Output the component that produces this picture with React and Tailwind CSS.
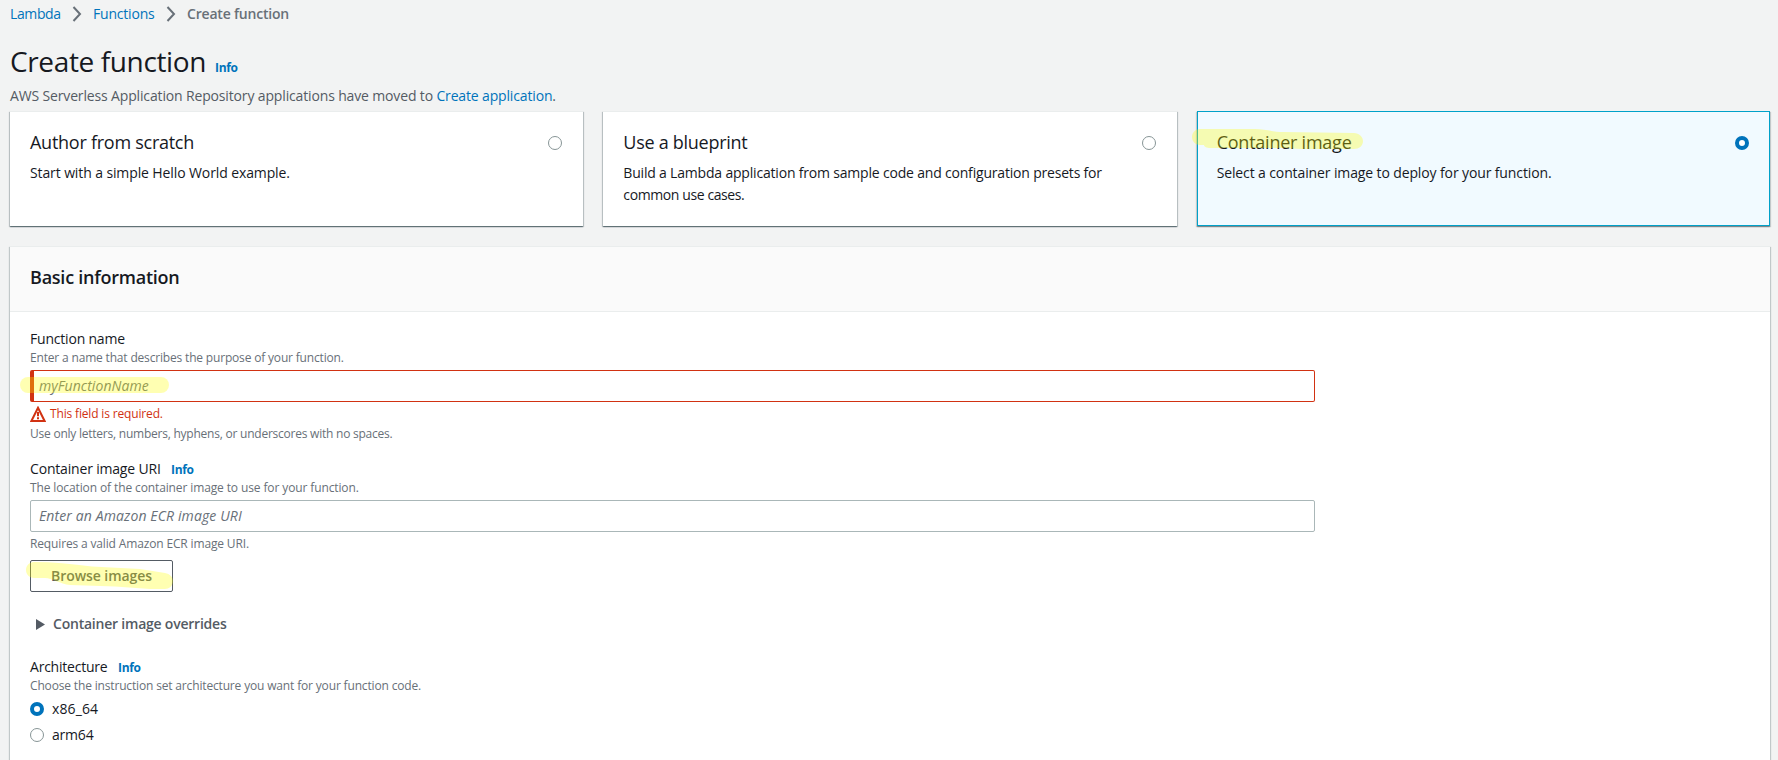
import React from 'react';

function Info({ className = '' }) {
  return (
    <a className={`text-[12px] leading-4 font-bold tracking-[-0.34px] text-[#0073bb] ${className}`}>Info</a>
  );
}

function Radio({ checked }) {
  return checked ? (
    <span className="box-border block size-[14px] shrink-0 rounded-full border-[4px] border-[#0073bb] bg-white" />
  ) : (
    <span className="box-border block size-[14px] shrink-0 rounded-full border border-[#879596] bg-white" />
  );
}

function Chevron({ className = '' }) {
  return (
    <svg className={className} width="10" height="16" viewBox="0 0 10 16" fill="none" stroke="#687078" strokeWidth="2">
      <path d="M1.5 1 L8 8 L1.5 15" />
    </svg>
  );
}

function OptionCard({ title, titleClass, selected, children }) {
  return (
    <div
      className={`h-[115px] pt-[19px] ${
        selected
          ? 'border border-[#00a1c9] bg-[#f1faff] pr-5 pl-[19px] shadow-[0_1px_1px_0_rgba(0,28,36,0.3),1px_1px_1px_0_rgba(0,28,36,0.15),-1px_1px_1px_0_rgba(0,28,36,0.15)]'
          : 'border-t border-[#eaeded] bg-white pr-[21px] pl-5 shadow-[0_1px_1px_0_rgba(0,28,36,0.4),1px_1px_1px_0_rgba(0,28,36,0.18),-1px_1px_1px_0_rgba(0,28,36,0.18)]'
      }`}
    >
      <div className="flex items-start justify-between">
        <h2 className={`text-[18px] leading-[22px] ${titleClass}`}>{title}</h2>
        <div className="pt-[5px]">
          <Radio checked={selected} />
        </div>
      </div>
      <div className="mt-[9px] text-[14px] leading-[22px]">{children}</div>
    </div>
  );
}

export default function App() {
  return (
    <div className="relative h-[760px] w-[1778px] overflow-hidden bg-[#f2f3f3] pr-2 pl-[10px] font-['Open_Sans','Noto_Sans',sans-serif] text-[#16191f]">
      <nav className="flex h-[25px] items-center pt-[3px] text-[14px] leading-[22px]">
        <a className="w-[62px] tracking-[-0.38px] text-[#0073bb]">Lambda</a>
        <Chevron className="mr-[11px]" />
        <a className="w-[73px] tracking-[-0.2px] text-[#0073bb]">Functions</a>
        <Chevron className="mr-[11px]" />
        <span className="font-semibold tracking-[-0.2px] text-[#687078]">Create function</span>
      </nav>

      <header className="mt-[18px] flex h-9 items-baseline">
        <h1 className="w-[205px] text-[28px] leading-9 tracking-[-0.37px]">Create function</h1>
        <Info />
      </header>
      <p className="mt-[6px] h-[26px] text-[14px] leading-[22px] tracking-[-0.15px] text-[#545b64]">
        AWS Serverless Application Repository applications have moved to <a className="text-[#0073bb]">Create application</a>.
      </p>

      <section className="grid grid-cols-3 gap-5">
        <OptionCard title="Author from scratch" titleClass="tracking-[-0.26px]">
          <p className="tracking-[-0.11px]">Start with a simple Hello World example.</p>
        </OptionCard>
        <OptionCard title="Use a blueprint" titleClass="tracking-[-0.28px]">
          <p className="tracking-[-0.19px]">
            Build a Lambda application from sample code and configuration presets for
            <br />
            <span className="tracking-[-0.4px]">common use cases.</span>
          </p>
        </OptionCard>
        <OptionCard title="Container image" titleClass="tracking-[-0.24px]" selected>
          <p className="tracking-[-0.12px]">Select a container image to deploy for your function.</p>
        </OptionCard>
      </section>

      <section className="mt-5 h-[520px] border-t border-[#eaeded] bg-white shadow-[1px_1px_1px_0_rgba(0,28,36,0.2),-1px_1px_1px_0_rgba(0,28,36,0.2)]">
        <div className="h-[65px] border-b border-[#eaeded] bg-[#fafafa] px-5 pt-[19px]">
          <h2 className="text-[18px] leading-[22px] font-semibold tracking-[-0.24px]">Basic information</h2>
        </div>

        <div className="px-5 pt-4">
          <div className="w-[1285px]">
            <label className="block text-[14px] leading-[22px] tracking-[-0.2px]">Function name</label>
            <p className="text-[12px] leading-4 tracking-[-0.175px] text-[#687078]">
              Enter a name that describes the purpose of your function.
            </p>
            <div className="mt-1 flex h-8 items-center rounded-[2px] border border-l-[4px] border-[#d13212] bg-white pl-[5px] text-[14px] leading-[22px] tracking-[0.06px] text-[#687078] italic">
              myFunctionName
            </div>
            <div className="mt-1 flex h-4 items-center gap-1 text-[12px] leading-4 tracking-[-0.16px] text-[#d13212]">
              <svg width="16" height="16" viewBox="0 0 16 16" fill="none" stroke="#d13212" strokeWidth="2">
                <path d="M8 1.8 L14.6 15 H1.4 Z" />
                <path d="M8 6 V10.2 M8 11.2 V13.2" />
              </svg>
              This field is required.
            </div>
            <p className="mt-1 text-[12px] leading-4 tracking-[-0.232px] text-[#687078]">
              Use only letters, numbers, hyphens, or underscores with no spaces.
            </p>
          </div>

          <div className="mt-4 w-[1285px]">
            <div className="flex h-[22px] items-baseline">
              <label className="w-[141px] text-[14px] leading-[22px] tracking-[-0.18px]">Container image URI</label>
              <Info />
            </div>
            <p className="text-[12px] leading-4 tracking-[-0.118px] text-[#687078]">
              The location of the container image to use for your function.
            </p>
            <div className="mt-1 flex h-8 items-center rounded-[2px] border border-[#aab7b8] bg-white pl-2 text-[14px] leading-[22px] tracking-[0.12px] text-[#687078] italic">
              Enter an Amazon ECR image URI
            </div>
            <p className="mt-1 text-[12px] leading-4 tracking-[-0.15px] text-[#687078]">Requires a valid Amazon ECR image URI.</p>
          </div>

          <button className="mt-2 flex h-8 w-[143px] items-center justify-center rounded-[2px] border border-[#545b64] bg-white text-[14px] leading-[22px] font-semibold tracking-[-0.06px] text-[#545b64]">
            Browse images
          </button>

          <div className="mt-[21px] flex h-[22px] items-center pl-[6px] text-[14px] leading-[22px] font-semibold tracking-[-0.22px] text-[#545b64]">
            <svg className="mr-2" width="9" height="11" viewBox="0 0 9 11" fill="#545b64">
              <path d="M0 0 L9 5.500 L0 11 Z" />
            </svg>
            Container image overrides
          </div>

          <div className="mt-[21px]">
            <div className="flex h-[22px] items-baseline">
              <label className="w-[88px] text-[14px] leading-[22px] tracking-[-0.22px]">Architecture</label>
              <Info />
            </div>
            <p className="text-[12px] leading-4 tracking-[-0.16px] text-[#687078]">
              Choose the instruction set architecture you want for your function code.
            </p>
            <div className="mt-1 flex h-[22px] items-center gap-2 text-[14px] leading-[22px]">
              <Radio checked />
              <span className="tracking-[0.12px]">x86_64</span>
            </div>
            <div className="mt-1 flex h-[22px] items-center gap-2 text-[14px] leading-[22px]">
              <Radio />
              <span className="tracking-[-0.2px]">arm64</span>
            </div>
          </div>
        </div>
      </section>

      <svg className="pointer-events-none absolute top-0 left-0" width="1778" height="760" viewBox="0 0 1778 760" fill="#ffff00" fillOpacity="0.3">
        <path d="M1200 129 H1255 C1266 129 1272 132 1284 132 L1354 133 C1359 133 1363 137 1363 141 C1363 146 1359 149 1354 149 H1300 L1284 148 H1210 C1207 148 1204 147 1204 145 H1200 C1195 145 1192 141 1192 137 C1192 133 1195 129 1200 129 Z" />
        <rect x="20" y="377" width="149" height="16" rx="8" />
        <path d="M34 562 C52 562 72 564 92 566.500 L140 569 L165 573 C170 574 173 577 173 581 C173 586 169 589 165 589 H150 L115 586.500 L70 585 C60 584 52 578 45 578 H34 C29 578 26 574 26 570 C26 566 29 562 34 562 Z" />
      </svg>
    </div>
  );
}
